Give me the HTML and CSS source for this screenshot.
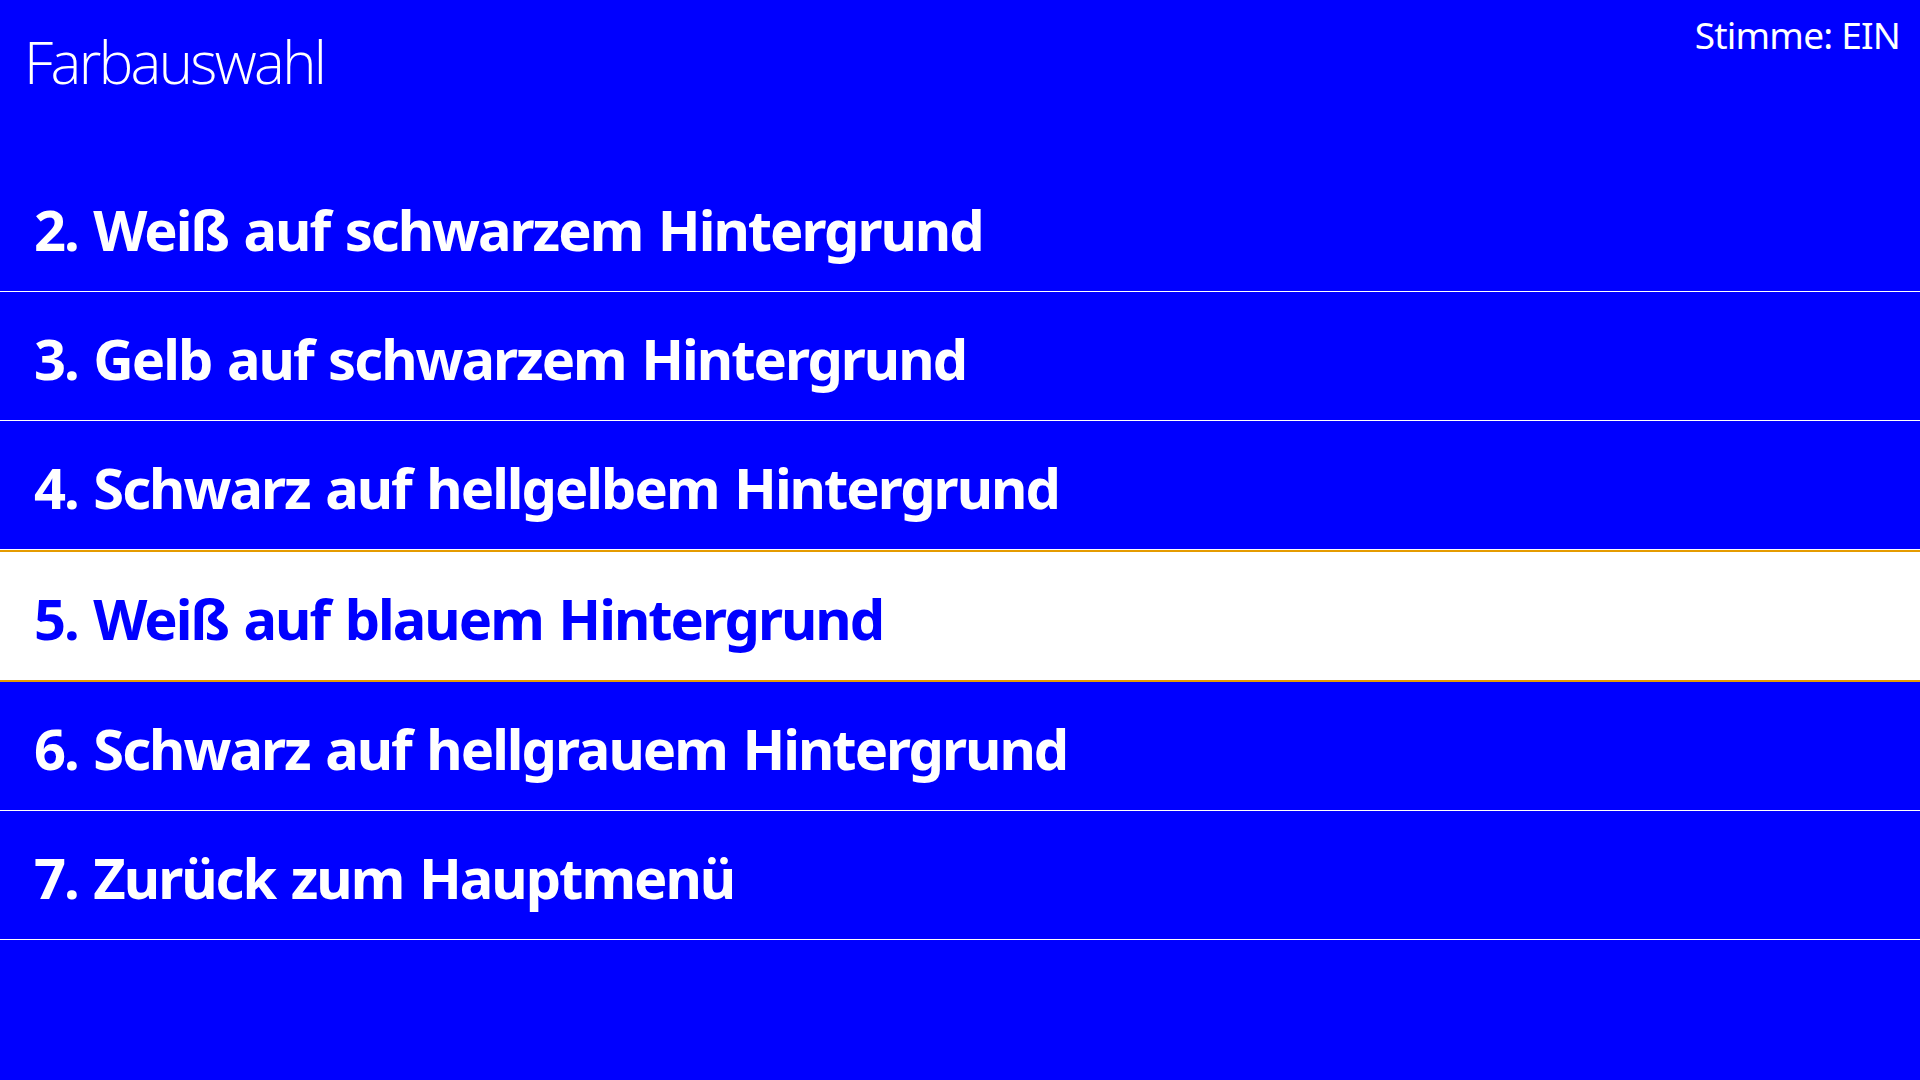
FILE: index.html
```html
<!DOCTYPE html>
<html lang="de">
<head>
<meta charset="utf-8">
<title>Farbauswahl</title>
<link rel="stylesheet" href="styles.css">
</head>
<body>
<div class="screen">
  <header class="header">
    <h1 class="title">Farbauswahl</h1>
    <div class="voice">Stimme: EIN</div>
  </header>
  <ul class="menu">
    <li class="item">2. Weiß auf schwarzem Hintergrund</li>
    <li class="item">3. Gelb auf schwarzem Hintergrund</li>
    <li class="item">4. Schwarz auf hellgelbem Hintergrund</li>
    <li class="item item-selected">5. Weiß auf blauem Hintergrund</li>
    <li class="item">6. Schwarz auf hellgrauem Hintergrund</li>
    <li class="item">7. Zurück zum Hauptmenü</li>
  </ul>
</div>
</body>
</html>
```

FILE: styles.css
```css
html, body {
  margin: 0;
  padding: 0;
  background: #0000ff;
}

.screen {
  width: 1920px;
  height: 1080px;
  background: #0000ff;
  color: #ffffff;
  font-family: "Noto Sans", "Open Sans", sans-serif;
  overflow: hidden;
}

.header {
  height: 163px;
  display: flex;
  justify-content: space-between;
  align-items: flex-start;
  box-sizing: border-box;
}

.title {
  margin: 0;
  padding: 33px 0 0 24px;
  font-family: "Open Sans", "Noto Sans", sans-serif;
  font-weight: 300;
  font-size: 58px;
  line-height: 1;
  letter-spacing: -2.6px;
}

.voice {
  padding: 16px 20px 0 0;
  font-size: 37px;
  line-height: 1;
  font-weight: 400;
  letter-spacing: -0.8px;
}

.menu {
  list-style: none;
  margin: 0;
  padding: 0;
}

.item {
  height: 129px;
  box-sizing: border-box;
  padding: 38px 0 0 34px;
  border-bottom: 1px solid #ffffff;
  font-size: 56px;
  font-weight: 700;
  line-height: 1;
  letter-spacing: -2px;
  word-spacing: 3px;
  white-space: nowrap;
}

.item-selected {
  height: 132px;
  background: #ffffff;
  color: #0000ff;
  border-top: 2px solid #e59b00;
  border-bottom: 2px solid #e59b00;
}
```
